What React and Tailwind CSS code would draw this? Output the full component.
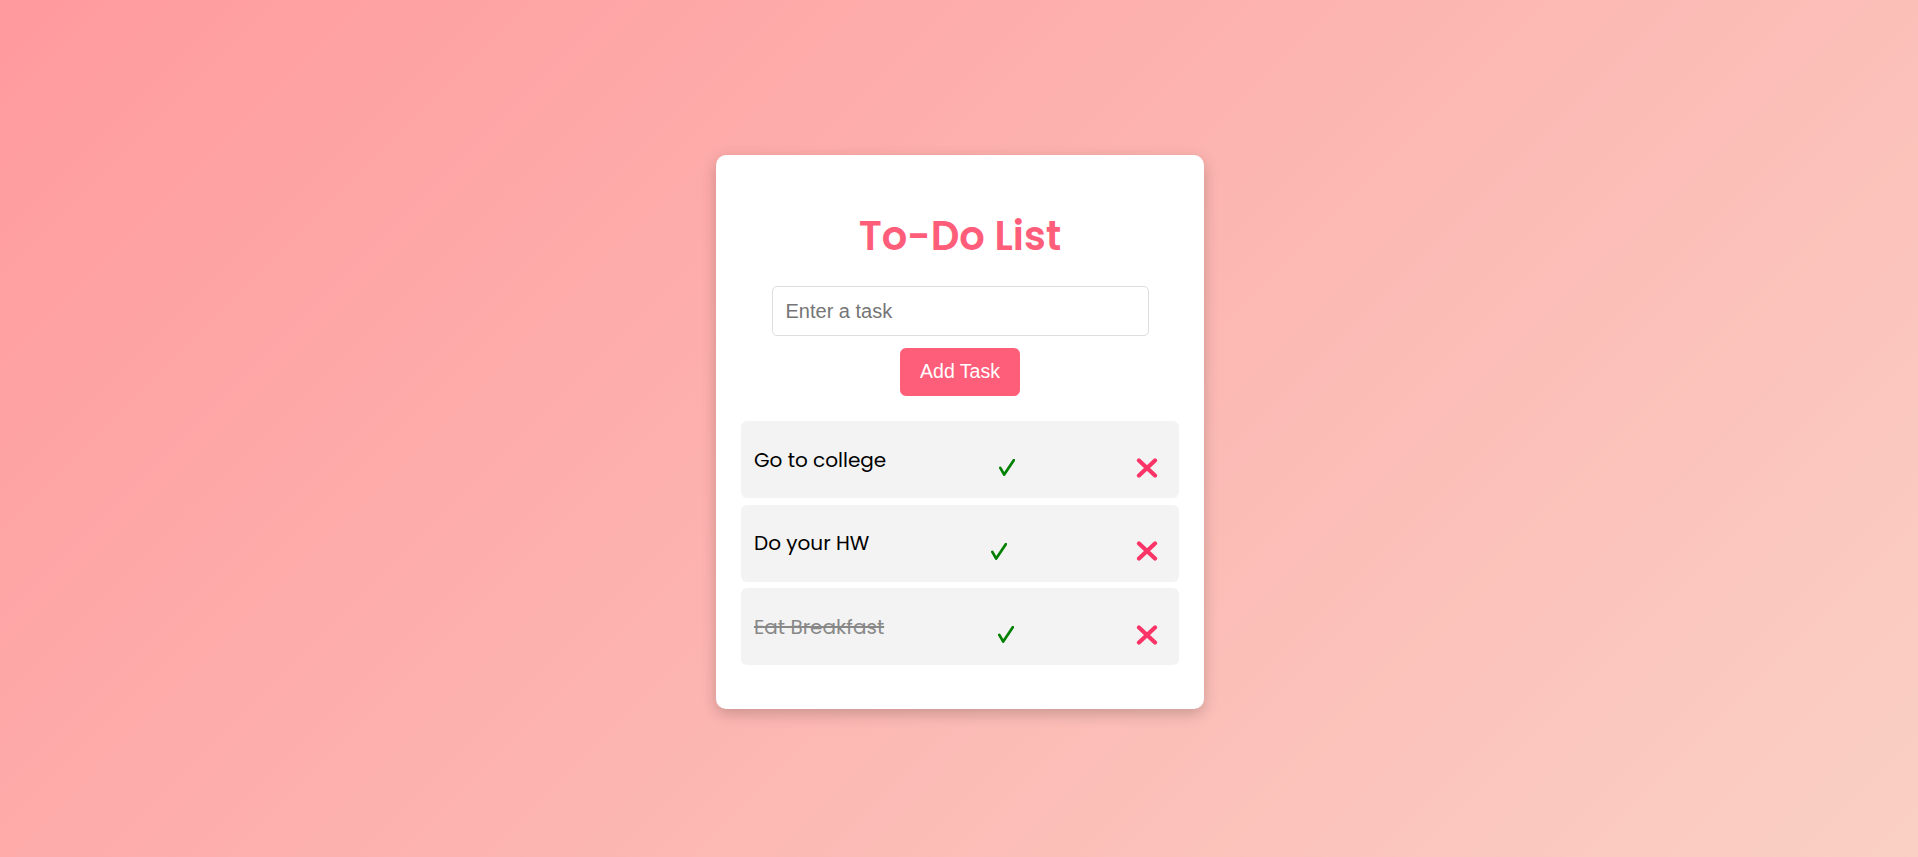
import React, { useState } from 'react';

const initialTasks = [
  { id: 1, text: 'Go to college', done: false },
  { id: 2, text: 'Do your HW', done: false },
  { id: 3, text: 'Eat Breakfast', done: true },
];

const CheckIcon = () => (
  <svg width="16" height="17" viewBox="0 0 16 17" fill="none">
    <path d="M1.3 8.8 L5.2 15.6 L14.8 1.2" stroke="#008000" strokeWidth="2.7" strokeLinecap="round" strokeLinejoin="round" />
  </svg>
);

const CrossIcon = () => (
  <svg width="22" height="20" viewBox="0 0 22 20" fill="none">
    <path d="M3 2.5 L19 17.5 M19 2.5 L3 17.5" stroke="#fb3468" strokeWidth="4.2" strokeLinecap="round" />
  </svg>
);

export default function App() {
  const [tasks, setTasks] = useState(initialTasks);
  const [input, setInput] = useState('');

  const addTask = () => {
    if (!input.trim()) return;
    setTasks([...tasks, { id: Date.now(), text: input.trim(), done: false }]);
    setInput('');
  };

  const toggle = (id) => setTasks(tasks.map((t) => (t.id === id ? { ...t, done: !t.done } : t)));
  const remove = (id) => setTasks(tasks.filter((t) => t.id !== id));

  return (
    <div className="min-h-screen w-full flex items-center justify-center pt-[7px] pl-[2px] bg-[linear-gradient(135deg,#ff9a9e_0%,#fad0c4_100%)]">
      <div className="w-[488px] bg-white rounded-[10px] shadow-[0_5px_15px_rgba(0,0,0,0.2)] pt-[53px] pb-[44px] px-[25px] flex flex-col items-center">
        <h1 className="font-['Poppins','Open_Sans',sans-serif] font-semibold text-[40px] leading-[56px] text-[#ff5e7b]">
          To-Do List
        </h1>
        <input
          value={input}
          onChange={(e) => setInput(e.target.value)}
          placeholder="Enter a task"
          className="mt-[22px] w-[377px] h-[50px] border border-[#dddddd] rounded-[5px] px-[13px] font-['Liberation_Sans',Arial,sans-serif] text-[20px] text-black placeholder:text-[#757575] outline-none"
        />
        <button
          onClick={addTask}
          className="mt-[12px] w-[120px] h-[48px] rounded-[6px] bg-[#ff5e7b] text-white font-['Liberation_Sans',Arial,sans-serif] text-[19.5px]"
        >
          Add Task
        </button>
        <ul className="mt-[25px] w-full flex flex-col gap-[6.5px]">
          {tasks.map((task) => (
            <li
              key={task.id}
              className="h-[77px] bg-[#f3f3f3] rounded-[6px] pl-[13px] pr-[21px] flex items-center justify-between"
            >
              <span
                className={`font-['Poppins','Open_Sans',sans-serif] text-[20px] ${
                  task.done ? 'line-through text-[#888888]' : 'text-black'
                }`}
              >
                {task.text}
              </span>
              <button onClick={() => toggle(task.id)} className="pt-4 flex">
                <CheckIcon />
              </button>
              <button onClick={() => remove(task.id)} className="pt-4 w-[30px] flex justify-end">
                <CrossIcon />
              </button>
            </li>
          ))}
        </ul>
      </div>
    </div>
  );
}
